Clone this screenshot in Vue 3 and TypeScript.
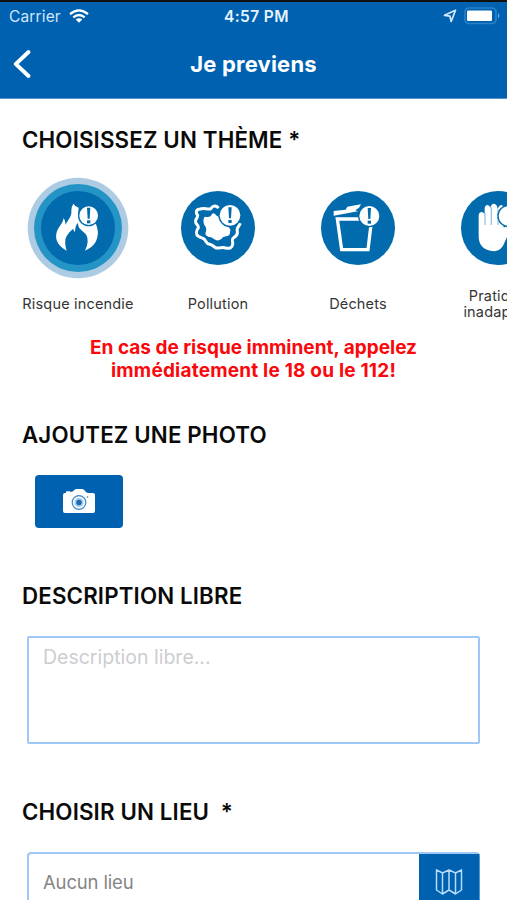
<script setup lang="ts">
import { ref } from 'vue'

interface Theme {
  id: string
  label: string
  badge: { x: number; y: number; r: number }
}

const themes: Theme[] = [
  { id: 'fire', label: 'Risque incendie', badge: { x: 32, y: -37, r: 28 } },
  { id: 'pollution', label: 'Pollution', badge: { x: 36, y: -38, r: 31 } },
  { id: 'waste', label: 'Déchets', badge: { x: 34, y: -36, r: 30 } },
  { id: 'practice', label: 'Pratique inadaptée', badge: { x: 32, y: -36, r: 30 } },
]

const selected = ref('fire')
const description = ref('')
</script>

<template>
  <main class="screen">
    <header class="top">
      <div class="status">
        <div class="status-left">
          <span class="carrier">Carrier</span>
          <svg class="wifi" viewBox="0 0 20 14" fill="none" stroke="#fff" stroke-width="2.2">
            <path d="M1 5.2Q10-2.6 19 5.2M4.3 8.4Q10 3.6 15.7 8.4" />
            <path d="M6.7 10.6Q10 7.7 13.3 10.6L10 13.8Z" fill="#fff" stroke="none" />
          </svg>
        </div>
        <span class="time">4:57 PM</span>
        <div class="status-right">
          <svg class="locate" viewBox="0 0 14 14" fill="none" stroke="#d5e8fa" stroke-width="1.7" stroke-linejoin="round">
            <path d="M12.5 1.3L1.5 6.3L6.9 7.2L8.2 12.5Z" />
          </svg>
          <svg class="battery" viewBox="0 0 37 18">
            <rect x="1" y="1" width="31" height="15.5" rx="4" fill="none" stroke="#2a80cb" stroke-width="1.7" />
            <rect x="3" y="3.5" width="25" height="10.5" rx="1.2" fill="#fff" />
            <path d="M34 6Q37 8.7 34 11.5Z" fill="#65a9df" />
          </svg>
        </div>
      </div>
      <nav class="nav">
        <button class="back" aria-label="Retour">
          <svg viewBox="0 0 18 30" fill="none" stroke="#fff" stroke-width="3.8" stroke-linecap="round" stroke-linejoin="round">
            <path d="M15.5 3L2.8 15L15.5 27" />
          </svg>
        </button>
        <h1>Je previens</h1>
      </nav>
    </header>

    <section class="theme-section">
      <h2>CHOISISSEZ UN THÈME *</h2>
      <div class="themes">
        <button v-for="t in themes" :key="t.id" class="theme" @click="selected = t.id">
          <svg class="theme-icon" viewBox="-150 -150 300 300">
            <template v-if="selected === t.id">
              <circle r="151" fill="#adcce3" />
              <circle r="132" fill="#2494c7" />
            </template>
            <circle r="111" fill="#026bad" />
            <path
              v-if="t.id === 'fire'"
              fill="#fff"
              d="M-34 68C-57 55-69 38-65 17C-61-3-45-12-43-30Q-38-22-37-10C-30-25-18-35-20-51Q-20-65-14-73Q-9-64 2-61Q-2-43 4-27Q22 1 53-14Q63 10 58 28C53 49 40 60 21 68Q35 40 25 21C14 6 0 5 0-15Q-8-9-9 10Q-12 14-14 2Q-31 15-37 31Q-41 49-34 68Z"
            />
            <g v-else-if="t.id === 'pollution'">
              <path
                fill="none"
                stroke="#fff"
                stroke-width="9"
                stroke-linejoin="round"
                d="M2-60C-8-70-18-66-22-57C-34-55-42-61-53-57C-68-56-67-45-61-38C-60-28-70-28-67-17C-65-9-57-9-59 0C-66 7-67 20-59 25C-51 30-45 28-40 35C-35 42-34 48-25 49C-16 50-13 57-5 60C8 61 13 56 23 60C34 63 43 59 44 49C46 41 39 37 45 31C52 25 60 22 58 11C54-2 63-3 67-14"
              />
              <path
                fill="#fff"
                d="M-40-34Q-27-31-21-37Q-16-48-9-42Q-5-36 3-34Q9-5 31-3Q40 4 36 12Q37 24 24 25Q14 26 10 33Q-1 41-11 34Q-18 27-29 26Q-42 22-36 10Q-33 0-41-9Q-47-24-40-34Z"
              />
            </g>
            <g v-else-if="t.id === 'waste'">
              <path fill="#fff" d="M-73-51L-37-55L-32-64L9-71L3-61L-8-53L0-50L-73-37Z" />
              <path fill="none" stroke="#fff" stroke-width="10" d="M5-27H-62L-49 65H30L39-10" />
            </g>
            <g v-else>
              <path
                fill="#fff"
                d="M-58-38Q-57-48-48-48Q-41-47-40-39V-60Q-38-70-30-69Q-24-67-23-58V-62Q-19-75-9-72Q-2-68-1-58Q9-78 17-62V0L32-12Q46-8 36 6L20 43Q11 69-12 70Q-56 67-58 28Z"
              />
              <path stroke="#9dc5e1" stroke-width="4" d="M-39-45V-9M-20-62V-9M0-57V-9" />
            </g>
            <g :transform="`translate(${t.badge.x} ${t.badge.y})`">
              <circle :r="t.badge.r + 4" fill="#026bad" />
              <circle :r="t.badge.r" fill="#fff" />
              <path d="M-5-24H5L3 9H-3Z" fill="#026bad" />
              <rect x="-5" y="14" width="10" height="9" fill="#026bad" />
            </g>
          </svg>
          <span class="theme-label">{{ t.label }}</span>
        </button>
      </div>
      <p class="warning">
        <span>En cas de risque imminent, appelez</span>
        <span class="wide">immédiatement le 18 ou le 112!</span>
      </p>
    </section>

    <section class="photo-section">
      <h2>AJOUTEZ UNE PHOTO</h2>
      <button class="photo" aria-label="Ajouter une photo">
        <svg viewBox="0 0 32 24">
          <path
            fill="#fff"
            d="M2 4H3V2.8Q3 2.2 4 2.2H6.5Q7.5 2.2 7.5 3L10 2.2L11.6.8Q12.3 0 13.5 0H19Q20 0 21 .8L23 3Q24 4 25.5 4H30Q32 4 32 6V22Q32 24 30 24H2Q0 24 0 22V6Q0 4 2 4Z"
          />
          <circle cx="16" cy="13.5" r="6.8" fill="#f2f8fd" stroke="#3d89c9" stroke-width="1.2" />
          <circle cx="16" cy="13.5" r="3.6" fill="#1769b3" stroke="#a9cbe9" stroke-width="1.8" />
          <circle cx="24.5" cy="8" r=".9" fill="#77aad5" />
        </svg>
      </button>
    </section>

    <section class="description-section">
      <h2>DESCRIPTION LIBRE</h2>
      <textarea v-model="description" placeholder="Description libre..." />
    </section>

    <section class="place-section">
      <h2>CHOISIR UN LIEU&nbsp; *</h2>
      <div class="place">
        <span class="place-value">Aucun lieu</span>
        <button class="map" aria-label="Choisir sur la carte">
          <svg viewBox="0 0 28 28" fill="none" stroke="#b5dcfa" stroke-width="1.5" stroke-linejoin="round">
            <path d="M1.5 1.8L7.5 5L14 1.8L20.5 5L26.5 1.8V22L20.5 26L14 22L7.5 26L1.5 22ZM7.5 5V26M14 1.8V22M20.5 5V26" />
          </svg>
        </button>
      </div>
    </section>
  </main>
</template>

<style>
body {
  overflow: hidden;
}
</style>

<style scoped>
.screen {
  width: 507px;
  height: 900px;
  overflow: hidden;
  background: #fff;
  font-family: Inter, "Liberation Sans", sans-serif;
  color: #0a0a0a;
}
button {
  border: 0;
  padding: 0;
  margin: 0;
  background: none;
  font: inherit;
  color: inherit;
}
svg {
  display: block;
}
h1,
h2,
p {
  margin: 0;
}
.top {
  box-sizing: border-box;
  height: 99px;
  border-top: 2px solid #111;
  border-bottom: 1px solid #5b91c8;
  background: #0061b1;
  color: #fff;
}
.status {
  display: grid;
  grid-template-columns: 1fr auto 1fr;
  align-items: center;
  height: 28px;
  padding: 0 6px 0 9px;
}
.status-left,
.status-right {
  display: flex;
  align-items: center;
}
.status-left {
  gap: 8px;
}
.status-right {
  justify-content: flex-end;
  gap: 7px;
}
.carrier {
  font-size: 15.5px;
  letter-spacing: 0.15px;
  color: #d2e6fa;
}
.time {
  font-size: 15.5px;
  font-weight: 600;
  letter-spacing: 0.4px;
  color: #e7f3ff;
  padding-left: 3px;
}
.wifi {
  width: 20px;
  height: 14px;
}
.locate {
  width: 14px;
  height: 14px;
}
.battery {
  width: 37px;
  height: 18px;
}
.nav {
  display: grid;
  grid-template-columns: 60px 1fr 60px;
  align-items: center;
  height: 68px;
}
.back {
  justify-self: start;
  padding-left: 13px;
}
.back svg {
  width: 18px;
  height: 30px;
}
h1 {
  font-size: 22px;
  line-height: 28px;
  font-weight: 650;
  letter-spacing: 0.2px;
  text-align: center;
}
h2 {
  font-size: 22.3px;
  line-height: 28px;
  font-weight: 640;
  letter-spacing: 0.15px;
  white-space: nowrap;
  padding-left: 22px;
}
.theme-section {
  height: 322px;
  padding-top: 27px;
  box-sizing: border-box;
}
.themes {
  display: flex;
  width: 568px;
  height: 182px;
  padding: 24px 0 0 8px;
  box-sizing: border-box;
}
.theme {
  display: flex;
  flex-direction: column;
  align-items: center;
  width: 140px;
  flex: none;
}
.theme-icon {
  width: 100px;
  height: 100px;
  overflow: visible;
}
.theme-label {
  display: flex;
  align-items: center;
  justify-content: center;
  width: 120px;
  height: 36px;
  margin-top: 8px;
  font-size: 14.5px;
  line-height: 16px;
  letter-spacing: 0.18px;
  color: #353535;
  text-align: center;
}
.theme:last-child .theme-label {
  width: 80px;
}
.warning {
  display: flex;
  flex-direction: column;
  align-items: center;
  font-size: 19px;
  line-height: 23px;
  font-weight: 700;
  color: #fa080b;
}
.warning .wide {
  letter-spacing: 0.2px;
}
.photo-section {
  height: 161px;
}
.photo {
  display: grid;
  place-items: center;
  box-sizing: border-box;
  width: 88px;
  height: 53px;
  margin: 26px 0 0 34.5px;
  padding-bottom: 2px;
  border-radius: 4px;
  background: #0061b1;
}
.photo svg {
  width: 32px;
  height: 24px;
}
.description-section {
  height: 216px;
}
textarea {
  display: block;
  box-sizing: border-box;
  width: 453px;
  height: 108px;
  margin: 26px 0 0 27px;
  padding: 6px 14px;
  border: 2px solid #9fc8f6;
  border-radius: 2px;
  background: #fff;
  font: 19.5px/26px Inter, sans-serif;
  resize: none;
  outline: none;
}
textarea::placeholder {
  color: #cdcdd1;
  opacity: 1;
}
.place {
  display: flex;
  justify-content: space-between;
  box-sizing: border-box;
  width: 453px;
  height: 60px;
  margin: 26px 0 0 27px;
  border: 2px solid #9fc8f6;
  border-right: 1px solid #5498d5;
  border-radius: 4px;
}
.place-value {
  padding-left: 14px;
  font-size: 18.5px;
  letter-spacing: -0.15px;
  line-height: 57px;
  color: #858585;
}
.map {
  display: grid;
  place-items: center;
  width: 60px;
  background: #0061b1;
}
.map svg {
  width: 28px;
  height: 28px;
}
</style>
